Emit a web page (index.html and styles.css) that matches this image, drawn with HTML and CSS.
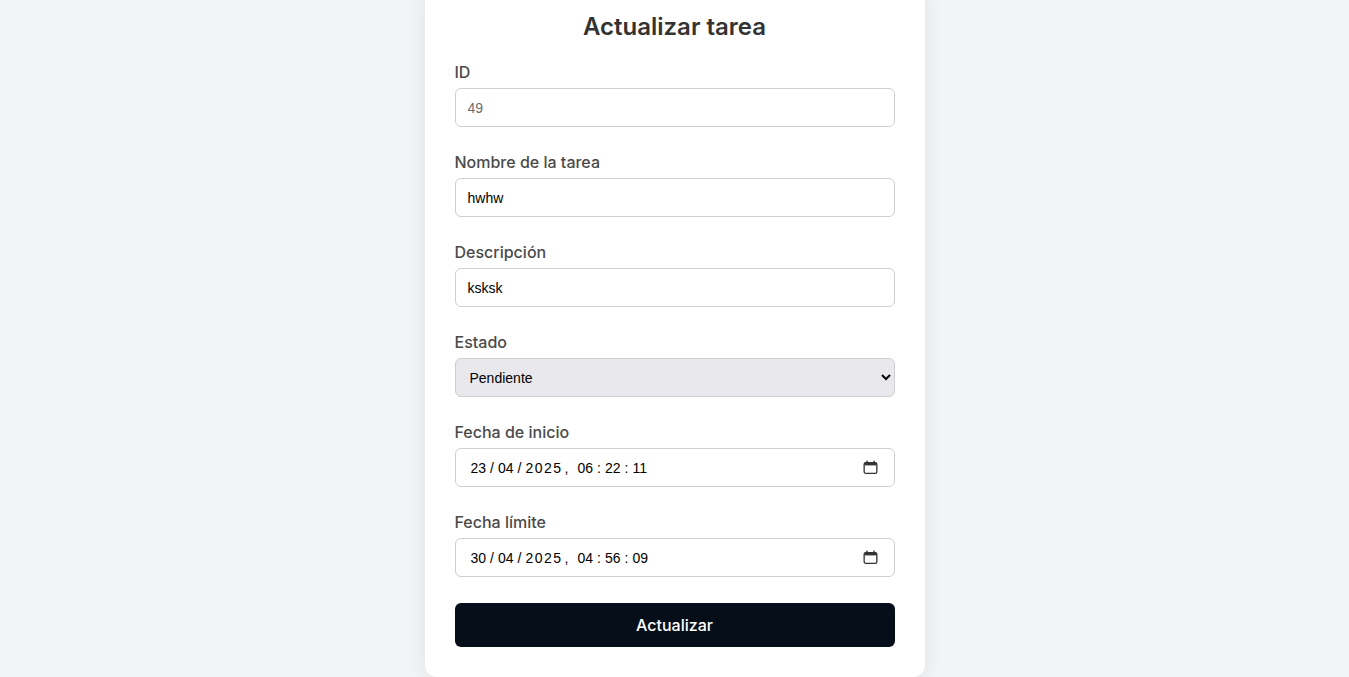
FILE: index.html
```html
<!DOCTYPE html>
<html lang="es">
<head>
<meta charset="utf-8">
<title>Actualizar tarea</title>
<link rel="stylesheet" href="styles.css">
</head>
<body>
<main class="page">
  <form class="card">
    <h2 class="title">Actualizar tarea</h2>
    <div class="group">
      <label class="label" for="id">ID</label>
      <input class="field field-readonly" id="id" type="text" value="49" readonly>
    </div>
    <div class="group">
      <label class="label" for="nombre">Nombre de la tarea</label>
      <input class="field" id="nombre" type="text" value="hwhw">
    </div>
    <div class="group">
      <label class="label" for="desc">Descripción</label>
      <input class="field" id="desc" type="text" value="ksksk">
    </div>
    <div class="group">
      <label class="label" for="estado">Estado</label>
      <select class="field select" id="estado">
        <option selected>Pendiente</option>
        <option>En progreso</option>
        <option>Completada</option>
      </select>
    </div>
    <div class="group">
      <label class="label">Fecha de inicio</label>
      <div class="field date">
        <span class="dt">
          <span>23</span><span>/</span><span>04</span><span>/</span><span class="yr">2025</span><span class="cm">,</span><span>06</span><span>:</span><span>22</span><span>:</span><span>11</span>
        </span>
        <svg class="cal" width="15" height="15" viewBox="0 0 15 15" aria-hidden="true">
          <rect x="1.15" y="2.65" width="12.7" height="10.7" rx="1.6" fill="none" stroke="#333" stroke-width="1.3"/>
          <rect x="1.5" y="3" width="12" height="2.4" fill="#333"/>
          <rect x="3.3" y="0.6" width="1.4" height="2.4" fill="#333"/>
          <rect x="10.3" y="0.6" width="1.4" height="2.4" fill="#333"/>
        </svg>
      </div>
    </div>
    <div class="group">
      <label class="label">Fecha límite</label>
      <div class="field date">
        <span class="dt">
          <span>30</span><span>/</span><span>04</span><span>/</span><span class="yr">2025</span><span class="cm">,</span><span>04</span><span>:</span><span>56</span><span>:</span><span>09</span>
        </span>
        <svg class="cal" width="15" height="15" viewBox="0 0 15 15" aria-hidden="true">
          <rect x="1.15" y="2.65" width="12.7" height="10.7" rx="1.6" fill="none" stroke="#333" stroke-width="1.3"/>
          <rect x="1.5" y="3" width="12" height="2.4" fill="#333"/>
          <rect x="3.3" y="0.6" width="1.4" height="2.4" fill="#333"/>
          <rect x="10.3" y="0.6" width="1.4" height="2.4" fill="#333"/>
        </svg>
      </div>
    </div>
    <button class="btn" type="button">Actualizar</button>
  </form>
</main>
</body>
</html>
```

FILE: styles.css
```css
* { box-sizing: border-box; }
html, body { margin: 0; padding: 0; }
body {
  background: #f3f4f6;
  font-family: Inter, "Noto Sans", sans-serif;
  overflow: hidden;
}
.page {
  height: 100vh;
  display: flex;
  flex-direction: column;
  justify-content: flex-end;
  align-items: center;
}
.card {
  flex-shrink: 0;
  width: 500px;
  background: #fff;
  border-radius: 12px;
  box-shadow: 0 4px 20px rgba(0, 0, 0, 0.08);
  padding: 30px;
  display: flex;
  flex-direction: column;
}
.title {
  margin: 0 0 22px;
  text-align: center;
  font-size: 24px;
  font-weight: 600;
  color: #333;
  line-height: normal;
}
.group {
  display: flex;
  flex-direction: column;
  margin-bottom: 26px;
}
.label {
  font-size: 16px;
  font-weight: 500;
  color: #4a4a4a;
  line-height: 19px;
  margin-bottom: 6px;
}
.field {
  width: 100%;
  height: 39px;
  border: 1px solid #cfcfcf;
  border-radius: 6px;
  padding: 0 12px;
  font-family: "Liberation Sans", Arial, sans-serif;
  font-size: 14px;
  color: #000;
  background: #fff;
  outline: none;
}
.field-readonly { color: #6d6d6d; }
.select {
  background-color: #e9e9ed;
  padding: 0 6px 0 10px;
}
.date {
  display: flex;
  align-items: center;
  justify-content: space-between;
}
.dt {
  display: inline-flex;
  gap: 4px;
  padding-left: 3px;
}
.dt .yr { letter-spacing: 1.5px; margin-right: -2px; }
.dt .cm { margin-right: 5px; }
.cal { margin-right: 4px; display: block; }
.btn {
  height: 44px;
  width: 100%;
  border: none;
  border-radius: 6px;
  background: #060f19;
  color: #fff;
  font-family: Inter, "Noto Sans", sans-serif;
  font-size: 16px;
  font-weight: 500;
  cursor: pointer;
}
```
